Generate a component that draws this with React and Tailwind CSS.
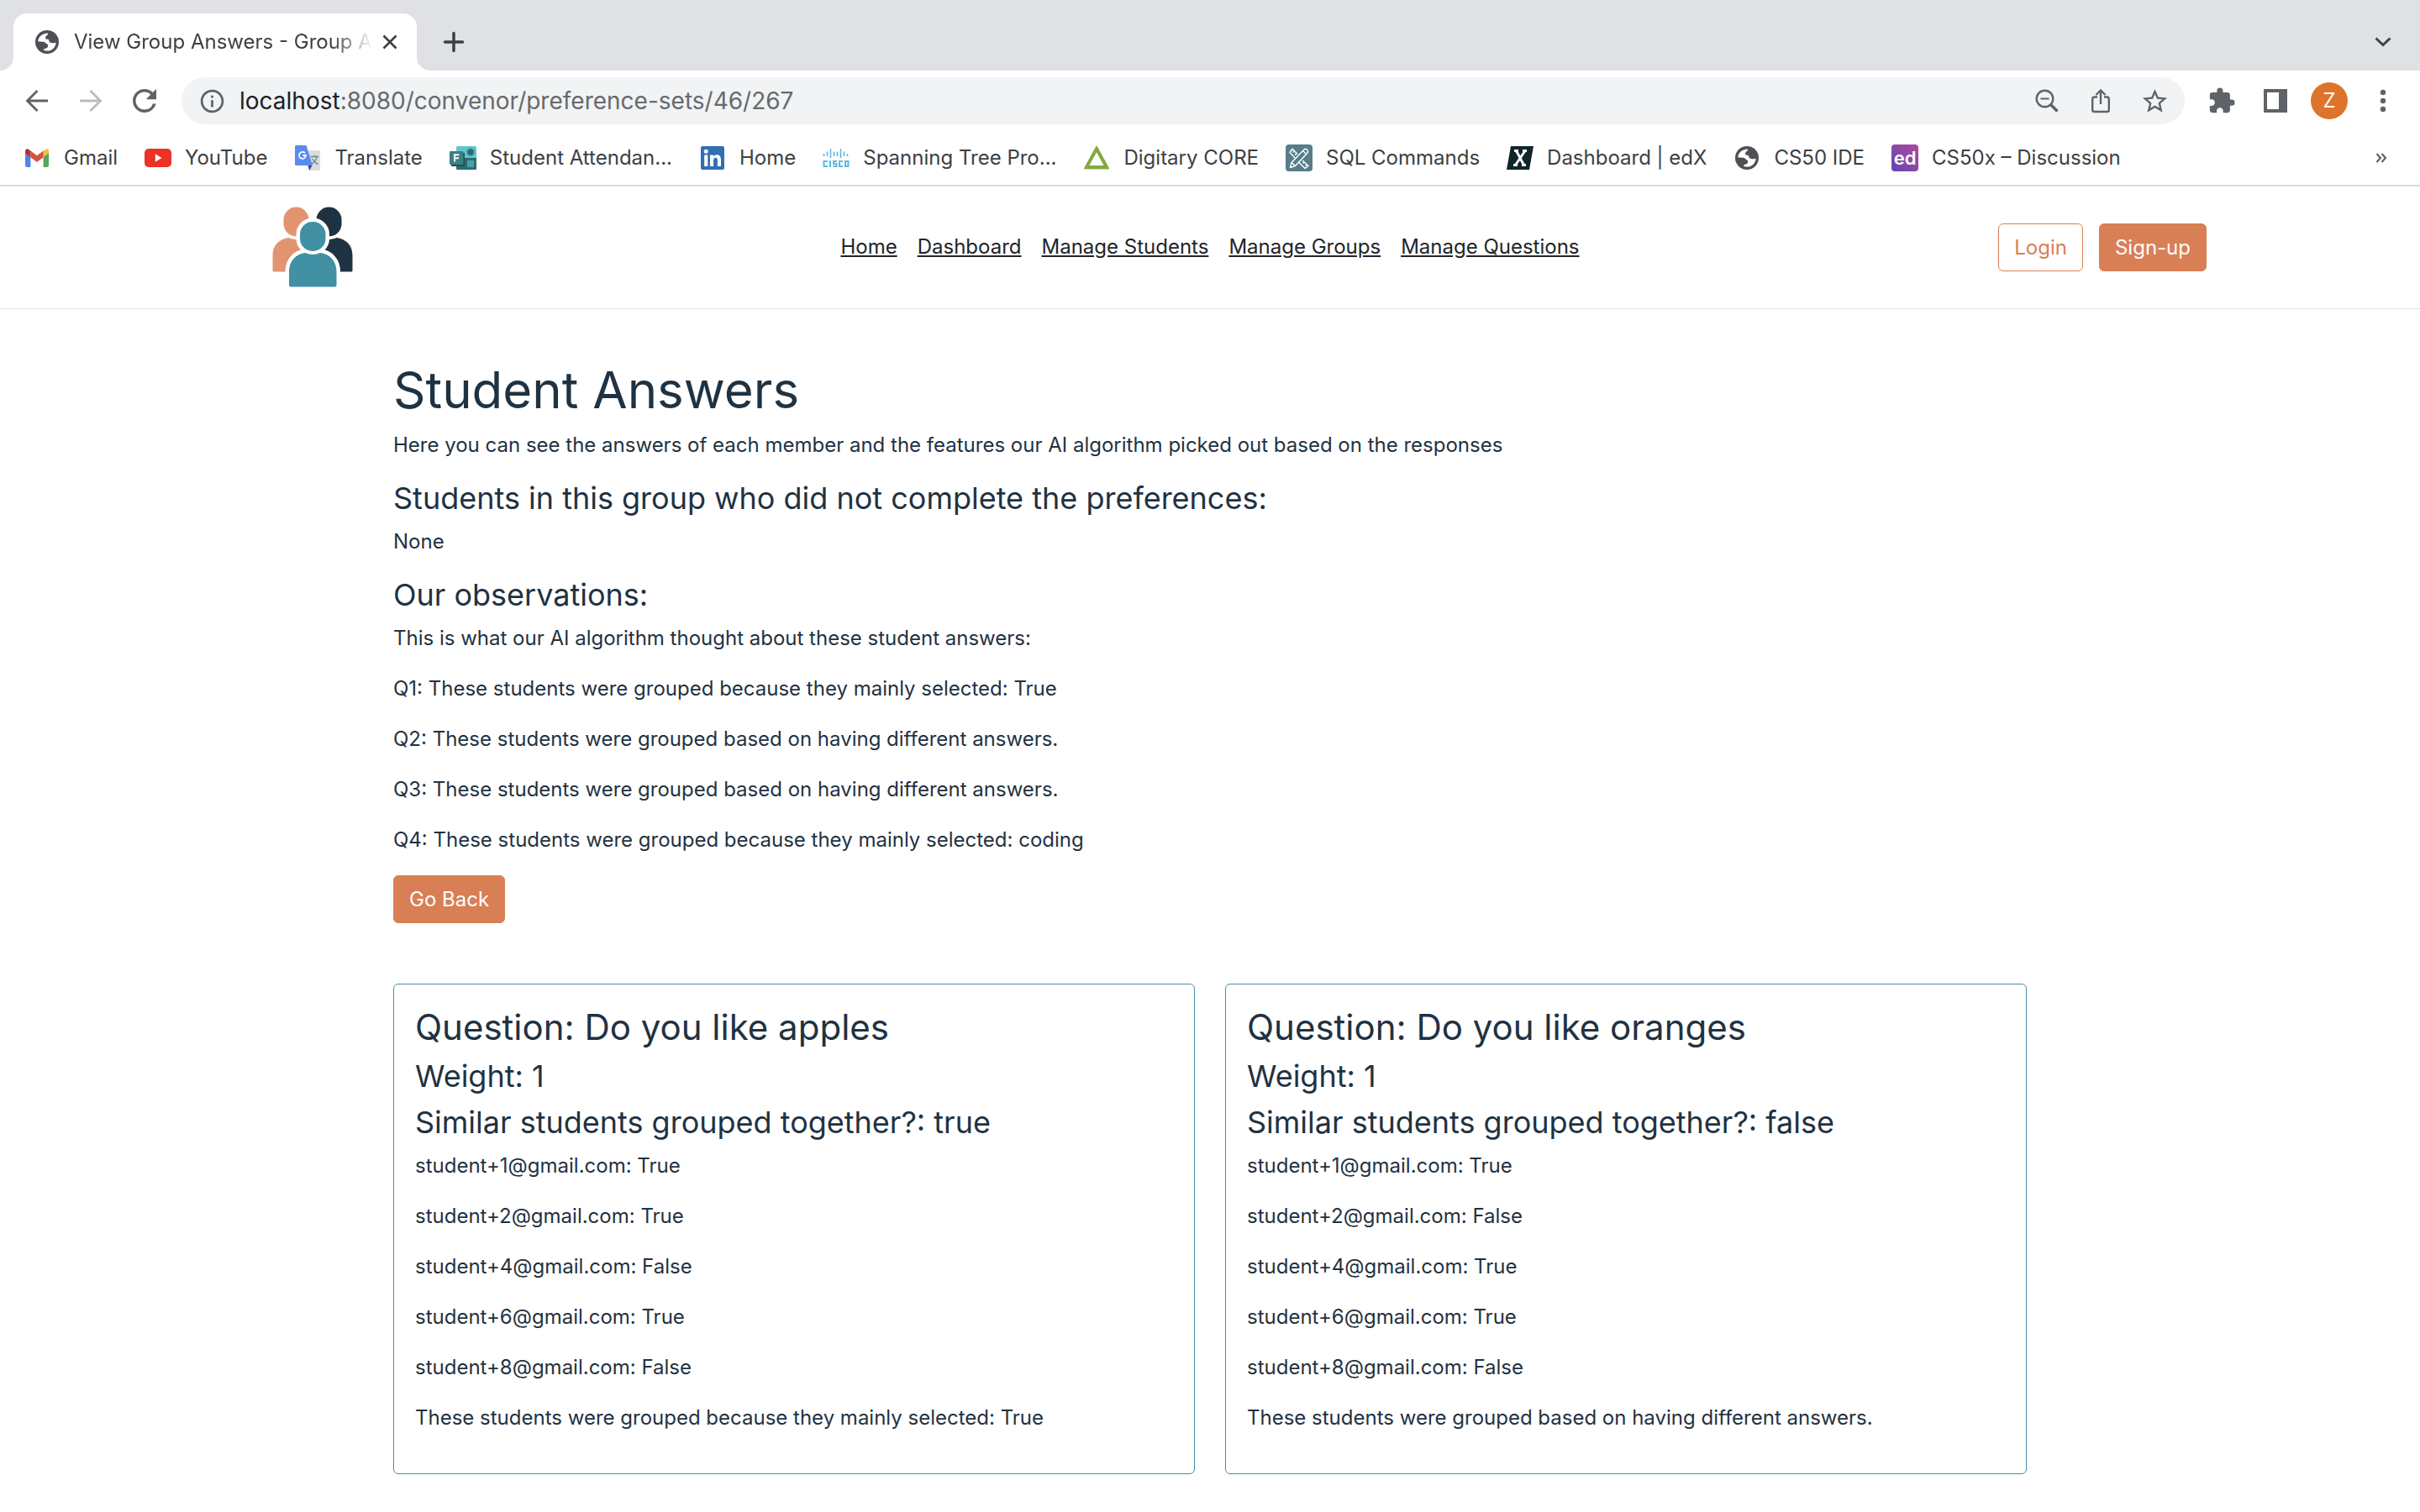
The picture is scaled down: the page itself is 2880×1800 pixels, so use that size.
import React from "react";
import { MdExtension, MdInfoOutline, MdRefresh, MdStarBorder } from "react-icons/md";

const GlobeIcon = () => (
  <svg width="28" height="28" viewBox="0 0 28 28" aria-hidden="true">
    <circle cx="14" cy="14" r="14" fill="#4e5056" />
    <path
      d="M3.2 13.2C3.6 8 8 3.6 15 3.4C15.4 5 14.4 6.2 12.6 6.8C12.2 8 12 9.4 12.6 10.4C14 10.8 15.6 10.6 16.2 11.4C16 13.6 17.4 15 19.6 15C21 15.6 22.6 15.4 24.6 14.4C24.4 19.6 20.4 24.4 14.6 24.6C12.8 24.6 11.4 24.4 10.2 23.8C9.8 22 11.4 21.6 13 21.4C14.8 21 15.4 19.6 15 17.6C14.6 16.2 13.4 16.4 12.6 15.8C11.8 14 10 13.6 8 13.8Z"
      fill="#fff"
    />
  </svg>
);

const GmailIcon = () => (
  <svg width="28" height="22" viewBox="0 0 28 22" aria-hidden="true">
    <path d="M0 5L6.4 9.6V22H2C1 22 0 21 0 20Z" fill="#5184ec" />
    <path d="M28 5L21.6 9.6V22H26C27 22 28 21 28 20Z" fill="#57a55a" />
    <path d="M21.6 2.4L25 .4C26.800-.4 28 1 28 3V5.400L21.600 10.200Z" fill="#f2bf42" />
    <path d="M0 3C0 1 1.600-.4 3.400.6L6.400 2.600V10.200L0 5.400Z" fill="#b5332a" />
    <path d="M6.400 2.400L14 8.200L21.600 2.400V10.200L14 16L6.400 10.200Z" fill="#d85140" />
  </svg>
);

const YouTubeIcon = () => (
  <svg width="32" height="22" viewBox="0 0 32 22" aria-hidden="true">
    <rect width="32" height="22" rx="5" fill="#ea3323" />
    <path d="M12.800 6.300V15.700L20.500 11Z" fill="#fff" />
  </svg>
);

const TranslateIcon = () => (
  <svg width="30" height="30" viewBox="0 0 30 30" aria-hidden="true">
    <path d="M14 6H28.500Q30 6 30 7.500V28.500Q30 30 28.500 30H17Z" fill="#dcdcdc" />
    <path d="M15.500 24H20.500L17 30Z" fill="#3444b8" />
    <path d="M1.500 0H13.500L21 24H1.500Q0 24 0 22.500V1.500Q0 0 1.500 0Z" fill="#5a8bee" />
    <path d="M12 9.200A4 4 0 1 0 13 12H9.400" fill="none" stroke="#fff" strokeWidth="1.800" />
    <path d="M18.500 13.500H28M23.200 11.500V13.500M26.300 13.500Q25 19 20 22M20.800 16Q23 20.500 27.500 22.500" fill="none" stroke="#6f8c99" strokeWidth="1.400" />
  </svg>
);

const FormsIcon = () => (
  <svg width="32" height="28" viewBox="0 0 32 28" aria-hidden="true">
    <rect x="8" width="24" height="28" rx="1.500" fill="#63c4cf" />
    <path d="M8 14H32V26.500Q32 28 30.500 28H9.500Q8 28 8 26.500Z" fill="#2b6b70" />
    <circle cx="25" cy="7" r="5" fill="#479ea6" />
    <circle cx="25" cy="7" r="3.500" fill="#2b6b70" />
    <rect x="21" y="17" width="8" height="8" fill="#4aa0a4" />
    <rect x="2" y="8" width="16" height="16" fill="#1f5054" />
    <rect y="6" width="16.500" height="16" rx="1" fill="#3a8084" />
    <path d="M6 18.500V10.300H11.500M6 14.300H11" fill="none" stroke="#fff" strokeWidth="2" />
  </svg>
);

const LinkedInIcon = () => (
  <svg width="28" height="28" viewBox="0 0 28 28" aria-hidden="true">
    <rect width="28" height="28" rx="2" fill="#2f6fb2" />
    <circle cx="6.200" cy="6.200" r="2.500" fill="#fff" />
    <path d="M4.200 10.500H8.300V24H4.200ZM11 10.500H14.900V12.400C15.700 11 17.300 10.200 19 10.200C23 10.200 24 12.800 24 16.500V24H19.900V17.300C19.900 15.500 19.800 13.700 17.700 13.700C15.600 13.700 15.100 15.400 15.100 17.200V24H11Z" fill="#fff" />
  </svg>
);

const CiscoIcon = () => (
  <svg width="32" height="24" viewBox="0 0 32 24" fill="none" stroke="#5db9e6" strokeWidth="1.600" aria-hidden="true">
    <path d="M1.500 7V10M5.500 4.500V10M9.500 1V12M13.500 4.500V10M17.500 4.500V10M21.500 1V12M25.500 4.500V10M29.500 7V10" />
    <path d="M6 16H1.500V22H6M9 15V23M17 16H13V19H16.500V22H12.500M24 16H20V22H24M27 16H30.500V22H27Z" strokeWidth="2" />
  </svg>
);

const DigitaryIcon = () => (
  <svg width="30" height="28" viewBox="0 0 30 28" aria-hidden="true">
    <path d="M15 3L27 25H3Z" fill="none" stroke="#82a93c" strokeWidth="4" />
    <path d="M1 27.500H29" stroke="#cfdcb4" strokeWidth="1" />
  </svg>
);

const SqlIcon = () => (
  <svg width="32" height="32" viewBox="0 0 32 32" aria-hidden="true">
    <rect width="32" height="32" rx="4" fill="#557d8b" />
    <g fill="none" stroke="#fff" strokeWidth="1.400" strokeLinejoin="round">
      <path d="M8 5L14 11.500M20 19L27 25.500L23 28.500L15.500 21M11 16L5 9.500L8 5M10 8L8.500 9.500M12.500 11L11 12.500M22 21L20.500 22.500M25 24L23.500 25.500" />
      <path d="M5.500 27.500L7 21.500L22 6C24 4 28 7.500 26 10L11.500 25.500ZM7 21.500L11.500 25.500M20.500 7.500L24.500 11.500" />
    </g>
  </svg>
);

const EdxIcon = () => (
  <svg width="32" height="28" viewBox="0 0 32 28" aria-hidden="true">
    <path d="M5 0H32L27 28H0Z" fill="#10262b" />
    <path d="M9 5.500H14M19 5.500H24M8 22.500H13M18 22.500H23M11.500 5.500L20.500 22.500M22 5.500L10.500 22.500" stroke="#fff" strokeWidth="3" />
  </svg>
);

const EdIcon = () => (
  <span className="flex h-8 w-8 items-center justify-center rounded-sm bg-linear-to-bl from-[#b2469b] to-[#5f45b4] text-[22px] leading-8 font-semibold text-white">
    ed
  </span>
);

const bookmarks = [
  ["Gmail", GmailIcon],
  ["YouTube", YouTubeIcon],
  ["Translate", TranslateIcon],
  ["Student Attendan...", FormsIcon],
  ["Home", LinkedInIcon],
  ["Spanning Tree Pro...", CiscoIcon],
  ["Digitary CORE", DigitaryIcon],
  ["SQL Commands", SqlIcon],
  ["Dashboard | edX", EdxIcon],
  ["CS50 IDE", GlobeIcon],
  ["CS50x – Discussion", EdIcon],
];

const ToolButton = ({ label, children }) => (
  <button type="button" aria-label={label} className="flex h-14 w-16 shrink-0 items-center justify-center text-[#5f6368]">
    {children}
  </button>
);

const TabFoot = ({ className }) => (
  <svg width="16" height="16" viewBox="0 0 16 16" className={className} aria-hidden="true">
    <path d="M16 0V16H0A16 16 0 0 0 16 0Z" fill="#fff" />
  </svg>
);

function TabStrip() {
  return (
    <div className="flex h-21 items-end bg-[#dfe1e5] px-4 text-[#3c4043]">
      <div className="relative flex h-17 w-120 items-center rounded-t-2xl bg-white pl-[26px]">
        <TabFoot className="absolute bottom-0 -left-4" />
        <TabFoot className="absolute bottom-0 -right-4 -scale-x-100" />
        <GlobeIcon />
        <span className="ml-[18px] w-[356px] mask-r-from-86% text-2xl whitespace-nowrap">
          View Group Answers - Group A
        </span>
        <button type="button" aria-label="Close tab" className="ml-1 flex h-8 w-8 items-center justify-center">
          <svg width="18" height="18" viewBox="0 0 18 18" stroke="currentColor" strokeWidth="2.600">
            <path d="M1.500 1.500L16.500 16.500M16.500 1.500L1.500 16.500" />
          </svg>
        </button>
      </div>
      <button type="button" aria-label="New tab" className="ml-6 flex h-17 w-10 items-center justify-center">
        <svg width="26" height="26" viewBox="0 0 26 26" stroke="currentColor" strokeWidth="3.500" strokeLinecap="round">
          <path d="M13 2.500V23.500M2.500 13H23.500" />
        </svg>
      </button>
      <button type="button" aria-label="Search tabs" className="ml-auto flex h-17 w-14 items-center justify-center">
        <svg width="20" height="12" viewBox="0 0 20 12" fill="none" stroke="currentColor" strokeWidth="3">
          <path d="M1.500 1.500L10 9.500L18.500 1.500" />
        </svg>
      </button>
    </div>
  );
}

function Toolbar() {
  return (
    <div className="flex h-18 items-center px-3">
      <ToolButton label="Back">
        <svg width="28" height="28" viewBox="0 0 28 28" fill="none" stroke="currentColor" strokeWidth="2.800">
          <path d="M27 14H3M14.500 2L2.500 14L14.500 26" />
        </svg>
      </ToolButton>
      <ToolButton label="Forward">
        <svg width="28" height="28" viewBox="0 0 28 28" fill="none" stroke="#babcbe" strokeWidth="2.800">
          <path d="M1 14H25M13.500 2L25.500 14L13.500 26" />
        </svg>
      </ToolButton>
      <ToolButton label="Reload">
        <MdRefresh size={42} />
      </ToolButton>
      <div className="ml-3 flex h-14 flex-1 items-center rounded-full bg-[#f1f3f4] pr-1 pl-5">
        <button type="button" aria-label="View site information" className="text-[#5f6368]">
          <MdInfoOutline size={33} />
        </button>
        <div role="textbox" aria-label="Address" className="ml-4 flex-1 text-[28px] text-[#66696d]">
          <span className="text-[#202124]">localhost</span>:8080/convenor/preference-sets/46/267
        </div>
        <ToolButton label="Zoom">
          <svg width="28" height="28" viewBox="0 0 28 28" fill="none" stroke="currentColor" strokeWidth="2.400">
            <circle cx="11.500" cy="11.500" r="9.800" />
            <path d="M6.500 11.500H16.500" strokeWidth="2" />
            <path d="M18.500 18.500L26.500 26.500" strokeWidth="3.600" />
          </svg>
        </ToolButton>
        <ToolButton label="Share">
          <svg width="24" height="30" viewBox="0 0 24 30" fill="none" stroke="currentColor" strokeWidth="2.400">
            <path d="M8 10.500H4.500Q2.200 10.500 2.200 12.800V25.700Q2.200 28 4.500 28H19.500Q21.800 28 21.800 25.700V12.800Q21.800 10.500 19.500 10.500H16M12 19V2.500M6.500 8L12 2.500L17.500 8" />
          </svg>
        </ToolButton>
        <ToolButton label="Bookmark this tab">
          <MdStarBorder size={35} />
        </ToolButton>
      </div>
      <div className="ml-3 flex">
        <ToolButton label="Extensions">
          <MdExtension size={34} />
        </ToolButton>
        <ToolButton label="Side panel">
          <svg width="28" height="28" viewBox="0 0 28 28" aria-hidden="true">
            <path d="M0 0H28V28H0ZM4 4V24H18V4Z" fill="currentColor" fillRule="evenodd" />
          </svg>
        </ToolButton>
        <ToolButton label="Profile">
          <span className="flex h-11 w-11 items-center justify-center rounded-full bg-[#de732c] text-2xl text-white">Z</span>
        </ToolButton>
        <ToolButton label="Menu">
          <svg width="8" height="28" viewBox="0 0 8 28" fill="currentColor">
            <circle cx="4" cy="4" r="3.200" />
            <circle cx="4" cy="14" r="3.200" />
            <circle cx="4" cy="24" r="3.200" />
          </svg>
        </ToolButton>
      </div>
    </div>
  );
}

function BookmarksBar() {
  return (
    <nav aria-label="Bookmarks" className="flex h-[66px] items-center gap-8 border-b-2 border-[#dadcdc] pr-[30px] pl-7 text-2xl text-[#3c4043]">
      {bookmarks.map(([name, Icon]) => (
        <a key={name} href="#" className="flex items-center gap-4 whitespace-nowrap">
          <span className="flex w-8 justify-center">
            <Icon />
          </span>
          {name}
        </a>
      ))}
      <button type="button" aria-label="More bookmarks" className="ml-auto flex h-8 w-8 items-center justify-center text-[#5f6368]">
        <svg width="14" height="12" viewBox="0 0 14 12" fill="none" stroke="currentColor" strokeWidth="2.200">
          <path d="M1.500 1L6 6L1.500 11M7.500 1L12 6L7.500 11" />
        </svg>
      </button>
    </nav>
  );
}

const Logo = () => (
  <svg width="96" height="96" viewBox="0 0 96 96" role="img" aria-label="Group logo">
    <g fill="#e29470">
      <rect x="13.500" y=".5" width="30" height="35" rx="15" />
      <path d="M.5 76V58C.5 46 8 38.500 19.500 37C26 40 34 38 40 44V77.500H2Q.5 77.500 .5 76Z" />
    </g>
    <g fill="#1f3242">
      <rect x="52.500" y=".5" width="30" height="35" rx="15" />
      <path d="M95.500 76V58C95.500 46 88 38.500 76.500 37C70 40 62 38 56 44V77.500H94Q95.500 77.500 95.500 76Z" />
    </g>
    <g fill="#4290a3" stroke="#fff" strokeWidth="9" paintOrder="stroke">
      <path d="M20 93.500V77C20 65 28 56 39.500 55C45 57.500 51.500 57.500 57 55C68.500 56 76.500 65 76.500 77V93.500Q76.500 95.500 74.500 95.500H22Q20 95.500 20 93.500Z" />
      <rect x="33" y="18" width="30.500" height="35" rx="15" />
    </g>
    <path d="M39.500 55C45 57.500 51.500 57.500 57 55L60 58H36Z" fill="#4290a3" />
  </svg>
);

const navLinks = ["Home", "Dashboard", "Manage Students", "Manage Groups", "Manage Questions"];

const buttonBase = "rounded-md border border-[#d87f56] px-[18px] py-[9px] leading-[37px]";

function SiteHeader() {
  return (
    <header className="border-b border-[#dee2e6] px-6 pt-6 pb-[25px]">
      <div className="mx-auto grid max-w-[2372px] grid-cols-[1fr_auto_1fr] items-center">
        <a href="#" className="justify-self-start pl-[70px]">
          <Logo />
        </a>
        <nav aria-label="Main" className="flex gap-6 text-[#212529]">
          {navLinks.map((link) => (
            <a key={link} href="#" className="underline">
              {link}
            </a>
          ))}
        </nav>
        <div className="flex gap-[19px] justify-self-end">
          <button type="button" className={`${buttonBase} text-[#d87f56]`}>
            Login
          </button>
          <button type="button" className={`${buttonBase} bg-[#d87f56] text-white`}>
            Sign-up
          </button>
        </div>
      </div>
    </header>
  );
}

const observations = [
  "This is what our AI algorithm thought about these student answers:",
  "Q1: These students were grouped because they mainly selected: True",
  "Q2: These students were grouped based on having different answers.",
  "Q3: These students were grouped based on having different answers.",
  "Q4: These students were grouped because they mainly selected: coding",
];

const questions = [
  {
    title: "Do you like apples",
    weight: 1,
    similar: "true",
    answers: [[1, "True"], [2, "True"], [4, "False"], [6, "True"], [8, "False"]],
    summary: "These students were grouped because they mainly selected: True",
  },
  {
    title: "Do you like oranges",
    weight: 1,
    similar: "false",
    answers: [[1, "True"], [2, "False"], [4, "True"], [6, "True"], [8, "False"]],
    summary: "These students were grouped based on having different answers.",
  },
];

function QuestionCard({ question }) {
  return (
    <section className="rounded-md border border-[#4290a3] px-[25px] pt-[25px] pb-6">
      <h3 className="mb-3 text-[42px] leading-[51px]">Question: {question.title}</h3>
      <h4 className="mb-3 text-4xl leading-[43px]">Weight: {question.weight}</h4>
      <h4 className="mb-3 text-4xl leading-[43px]">Similar students grouped together?: {question.similar}</h4>
      {question.answers.map(([id, answer]) => (
        <p key={id} className="mb-6">
          student+{id}@gmail.com: {answer}
        </p>
      ))}
      <p className="mb-6">{question.summary}</p>
    </section>
  );
}

export default function App() {
  return (
    <div className="min-h-screen bg-white font-['Inter',sans-serif]">
      <TabStrip />
      <Toolbar />
      <BookmarksBar />
      <div className="text-2xl leading-9">
        <SiteHeader />
        <main className="mx-auto max-w-[1980px] px-[18px] pt-[60px] text-[#1f3242]">
          <h1 className="mb-3 text-6xl leading-[72px]">Student Answers</h1>
          <p className="mb-6">
            Here you can see the answers of each member and the features our AI algorithm picked out based on the responses
          </p>
          <h4 className="mb-3 text-4xl leading-[43px]">Students in this group who did not complete the preferences:</h4>
          <p className="mb-6">None</p>
          <h4 className="mb-3 text-4xl leading-[43px]">Our observations:</h4>
          {observations.map((text) => (
            <p key={text} className="mb-6">
              {text}
            </p>
          ))}
          <button type="button" className={`${buttonBase} bg-[#d87f56] text-white`}>
            Go Back
          </button>
          <div className="mt-18 grid grid-cols-2 gap-9">
            {questions.map((question) => (
              <QuestionCard key={question.title} question={question} />
            ))}
          </div>
        </main>
      </div>
    </div>
  );
}
